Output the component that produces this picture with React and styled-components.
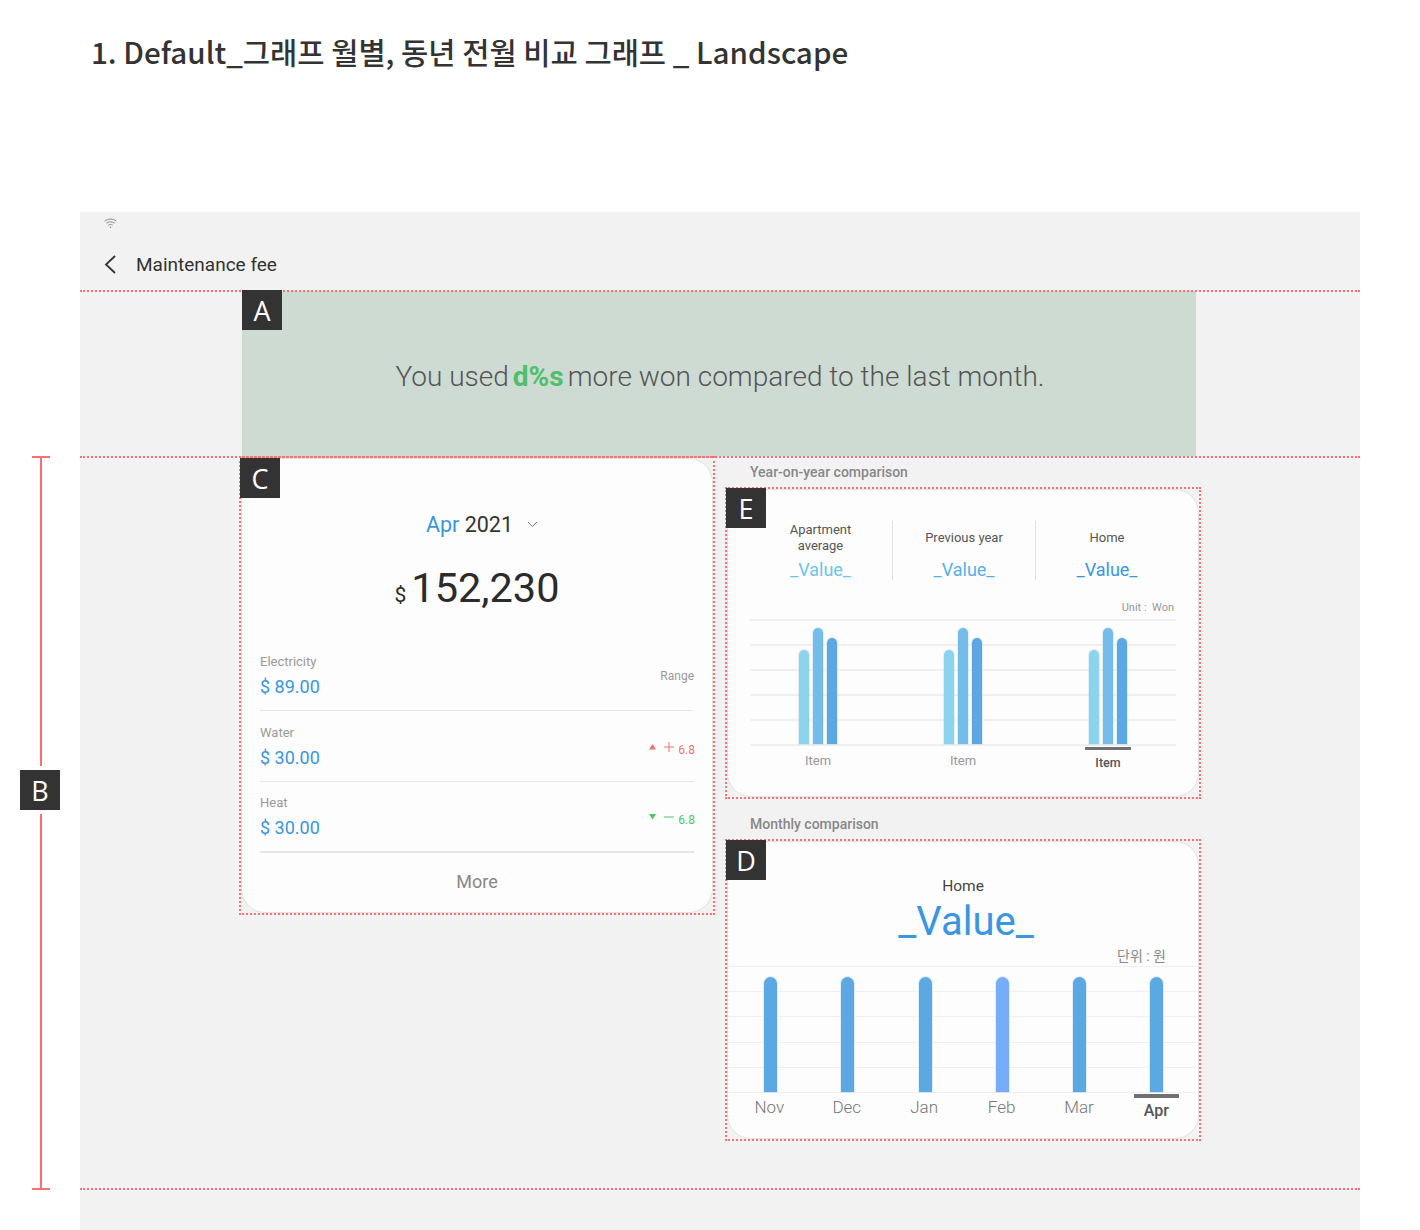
import styled, { createGlobalStyle } from "styled-components";

const GlobalStyle = createGlobalStyle`
    html, body {
        margin: 0;
        padding: 0;
        background: #ffffff;
    }
    * {
        box-sizing: border-box;
    }
`;

const yearItems = ["Item", "Item", "Item"];
const months = ["Nov", "Dec", "Jan", "Feb", "Mar", "Apr"];

const fees = [
    { label: "Electricity", value: "$ 89.00", range: true },
    { label: "Water", value: "$ 30.00", trend: "up" },
    { label: "Heat", value: "$ 30.00", trend: "down" },
];

const summary = [
    { label: <>Apartment<br />average</>, color: "#6cc3ec" },
    { label: "Previous year", color: "#56b0e8" },
    { label: "Home", color: "#3a96e0" },
];

export default function App() {
    return (
        <Page>
            <GlobalStyle />
            <Heading>1. Default_그래프 월별, 동년 전월 비교 그래프 _ Landscape</Heading>
            <Device>
                <StatusBar>
                    <WifiIcon />
                </StatusBar>
                <AppBar>
                    <BackIcon />
                    <AppTitle>Maintenance fee</AppTitle>
                </AppBar>
                <Banner>
                    <Badge $left={0} $top={-1}>A</Badge>
                    <BannerText>
                        <span>You used</span>
                        <strong>d%s</strong>
                        <span>more won compared to the last month.</span>
                    </BannerText>
                </Banner>
                <Content>
                    <FeeFrame>
                        <Badge $left={-1} $top={0}>C</Badge>
                        <FeeCard />
                    </FeeFrame>
                    <Side>
                        <SectionTitle>Year-on-year comparison</SectionTitle>
                        <Frame $height={312}>
                            <Badge $left={-1} $top={-1}>E</Badge>
                            <YearCard />
                        </Frame>
                        <SectionTitle $gap={9}>Monthly comparison</SectionTitle>
                        <Frame $height={302}>
                            <Badge $left={-1} $top={-1}>D</Badge>
                            <MonthCard />
                        </Frame>
                    </Side>
                </Content>
                <DottedLine $top={78} />
                <DottedLine $top={244} />
                <DottedLine $top={976} />
            </Device>
            <Ruler>
                <RulerBadge>B</RulerBadge>
            </Ruler>
        </Page>
    );
}

function FeeCard() {
    return (
        <Card>
            <DateRow>
                <DateText><span>Apr</span> 2021</DateText>
                <svg width="11" height="7" viewBox="0 0 11 7" fill="none">
                    <path d="M1 1l4.5 4.5L10 1" stroke="#777" strokeWidth="1" />
                </svg>
            </DateRow>
            <Amount><small>$</small>152,230</Amount>
            <FeeList>
                {fees.map((fee, index) => <FeeRow fee={fee} last={index === fees.length - 1} key={index} />)}
            </FeeList>
            <More>More</More>
        </Card>
    );
}

function FeeRow(props) {
    const { fee, last } = props;
    return (
        <Row $last={last}>
            <div>
                <RowLabel>{fee.label}</RowLabel>
                <RowValue>{fee.value}</RowValue>
            </div>
            {fee.range ? <RangeText>Range</RangeText> : <Trend trend={fee.trend} />}
        </Row>
    );
}

function Trend(props) {
    const up = props.trend === "up";
    return (
        <TrendBox $up={up}>
            <svg width="7" height="6" viewBox="0 0 7 6">
                <path d={up ? "M3.5 0L7 5.5H0z" : "M3.5 5.5L7 0H0z"} fill="currentColor" />
            </svg>
            <svg width="10" height="10" viewBox="0 0 10 10">
                <path d={up ? "M0 5h10M5 0v10" : "M0 5h10"} stroke="currentColor" strokeWidth="1" fill="none" />
            </svg>
            <TrendNumber>6.8</TrendNumber>
        </TrendBox>
    );
}

function YearCard() {
    return (
        <Card>
            <Summary>
                {summary.map((item, index) => (
                    <SummaryCol key={index} $first={index === 0}>
                        <SummaryLabel>{item.label}</SummaryLabel>
                        <SummaryValue $color={item.color}>_Value_</SummaryValue>
                    </SummaryCol>
                ))}
            </Summary>
            <UnitText>Unit :&nbsp; Won</UnitText>
            <YearChart>
                <GridLines>
                    {[0, 1, 2, 3, 4, 5].map(line => <GridLine key={line} />)}
                </GridLines>
                <YearBars>
                    {yearItems.map((item, index) => (
                        <YearGroup key={index}>
                            <Bar $width={10} $height={94} $color="#8cd3ee" />
                            <Bar $width={10} $height={116} $color="#74bce9" />
                            <Bar $width={10} $height={106} $color="#5ba8e3" />
                        </YearGroup>
                    ))}
                </YearBars>
            </YearChart>
            <YearLabels>
                {yearItems.map((item, index) => (
                    <YearLabel key={index} $active={index === 2}>{item}</YearLabel>
                ))}
            </YearLabels>
        </Card>
    );
}

function MonthCard() {
    return (
        <Card>
            <HomeLabel>Home</HomeLabel>
            <BigValue>_Value_</BigValue>
            <MonthUnit>단위 : 원</MonthUnit>
            <MonthChart>
                <GridLines>
                    {[0, 1, 2, 3, 4, 5].map(line => <GridLine key={line} $thin />)}
                </GridLines>
                <MonthBars>
                    {months.map(month => (
                        <Bar key={month} $width={13} $height={115} $color={month === "Feb" ? "#75adfb" : "#5ba8e3"} />
                    ))}
                </MonthBars>
            </MonthChart>
            <MonthLabels>
                {months.map(month => (
                    <MonthLabel key={month} $active={month === "Apr"}>{month}</MonthLabel>
                ))}
            </MonthLabels>
        </Card>
    );
}

function WifiIcon() {
    return (
        <svg width="13" height="11" viewBox="0 0 13 11" fill="none" stroke="#8a8a8a" strokeWidth="1">
            <path d="M.5 3.2C3.8.4 9.2.4 12.5 3.2" />
            <path d="M2.4 5.2C4.6 3.4 8.4 3.4 10.6 5.2" />
            <path d="M4.3 7.2C5.5 6.3 7.5 6.3 8.7 7.2" />
            <circle cx="6.5" cy="9.3" r=".8" fill="#8a8a8a" stroke="none" />
        </svg>
    );
}

function BackIcon() {
    return (
        <BackSvg width="12" height="19" viewBox="0 0 12 19" fill="none">
            <path d="M11 1L2 9.5L11 18" stroke="#333" strokeWidth="1.8" />
        </BackSvg>
    );
}

const Page = styled.div`
    position: relative;
    width: 1420px;
    height: 1230px;
    overflow: hidden;
    background: #ffffff;
    font-family: Roboto, "Noto Sans CJK KR", sans-serif;
`;

const Heading = styled.h1`
    height: 212px;
    margin: 0;
    padding: 31px 0 0 91px;
    font-family: "Noto Sans CJK KR", Roboto, sans-serif;
    font-size: 29.6px;
    font-weight: 500;
    line-height: 42px;
    color: #333333;
`;

const Device = styled.div`
    position: relative;
    width: 1280px;
    height: 1018px;
    margin-left: 80px;
    background: #f2f2f2;
`;

const StatusBar = styled.div`
    display: flex;
    align-items: flex-start;
    height: 24px;
    padding: 6px 0 0 24px;
`;

const AppBar = styled.div`
    display: flex;
    align-items: center;
    height: 55px;
    padding: 2px 0 0 24px;
`;

const BackSvg = styled.svg`
    margin-right: 20px;
`;

const AppTitle = styled.div`
    font-size: 19px;
    color: #333333;
`;

const Banner = styled.div`
    position: relative;
    display: flex;
    align-items: center;
    justify-content: center;
    width: 954px;
    height: 165px;
    margin-left: 162px;
    padding: 6px 0 0 2px;
    background: #cddbd3;
`;

const BannerText = styled.div`
    display: flex;
    column-gap: 4px;
    font-size: 28px;
    font-weight: 300;
    color: #555555;
    white-space: nowrap;

    strong {
        font-weight: 700;
        color: #4fbf6b;
    }
`;

const Badge = styled.div`
    position: absolute;
    left: ${props => props.$left}px;
    top: ${props => props.$top}px;
    z-index: 3;
    display: flex;
    align-items: center;
    justify-content: center;
    width: 40px;
    height: 40px;
    background: #333333;
    color: #ffffff;
    font-family: "Open Sans", sans-serif;
    font-size: 27px;
`;

const Content = styled.div`
    display: flex;
    align-items: flex-start;
    column-gap: 10px;
    padding-left: 159px;
`;

const Frame = styled.div`
    position: relative;
    width: 476px;
    height: ${props => props.$height}px;
    border: 2px dotted #ff6f6f;
`;

const FeeFrame = styled(Frame)`
    height: 459px;
`;

const Side = styled.div`
    display: flex;
    flex-direction: column;
`;

const SectionTitle = styled.div`
    height: 31px;
    margin-top: ${props => props.$gap || 0}px;
    padding: 8px 0 0 25px;
    font-size: 14px;
    font-weight: 500;
    line-height: 16px;
    color: #888888;
`;

const Card = styled.div`
    height: 100%;
    border: 1px solid #e2e2e2;
    border-radius: 24px;
    background: #fdfdfd;
`;

const DateRow = styled.div`
    display: flex;
    align-items: center;
    justify-content: center;
    column-gap: 14px;
    margin: 50px 0 0 10px;
    height: 30px;
`;

const DateText = styled.div`
    font-size: 21.5px;
    color: #333333;

    span {
        color: #3a96e0;
    }
`;

const Amount = styled.div`
    display: flex;
    align-items: baseline;
    justify-content: center;
    column-gap: 5px;
    height: 50px;
    margin-top: 24px;
    font-size: 41.5px;
    line-height: 50px;
    color: #2b2b2b;

    small {
        font-size: 21px;
    }
`;

const FeeList = styled.div`
    margin: 27px 18px 0 18px;
`;

const Row = styled.div`
    display: flex;
    align-items: center;
    justify-content: space-between;
    height: 71px;
    padding-top: 2px;
    border-bottom: ${props => props.$last ? "2px" : "1px"} solid #e6e6e6;
`;

const RowLabel = styled.div`
    font-size: 13px;
    line-height: 16px;
    color: #999999;
`;

const RowValue = styled.div`
    margin-top: 5px;
    font-size: 18px;
    line-height: 24px;
    color: #3a96e0;
`;

const RangeText = styled.div`
    font-size: 12px;
    color: #999999;
`;

const TrendBox = styled.div`
    display: flex;
    align-items: center;
    column-gap: 8px;
    margin: 0 -1px 1px 0;
    color: ${props => props.$up ? "#f47272" : "#4fc56b"};
`;

const TrendNumber = styled.span`
    margin: 6px 0 0 -4px;
    font-size: 12px;
    line-height: 14px;
`;

const More = styled.div`
    margin-top: 18px;
    font-size: 18px;
    line-height: 22px;
    text-align: center;
    color: #888888;
`;

const Summary = styled.div`
    display: flex;
    height: 59px;
    margin: 31px 0 0 21px;
`;

const SummaryCol = styled.div`
    display: flex;
    flex-direction: column;
    align-items: center;
    justify-content: space-between;
    width: 143px;
    border-left: ${props => props.$first ? "none" : "1px solid #e2e2e2"};
`;

const SummaryLabel = styled.div`
    display: flex;
    flex: 1;
    align-items: center;
    padding-bottom: 6px;
    font-size: 13px;
    line-height: 16px;
    text-align: center;
    color: #555555;
`;

const SummaryValue = styled.div`
    font-size: 18px;
    line-height: 20px;
    color: ${props => props.$color};
`;

const UnitText = styled.div`
    margin-top: 21px;
    padding-right: 24px;
    font-size: 11px;
    line-height: 14px;
    text-align: right;
    color: #999999;
`;

const YearChart = styled.div`
    position: relative;
    height: 127px;
    margin: 4px 22px 0 22px;
`;

const GridLines = styled.div`
    display: flex;
    flex-direction: column;
    justify-content: space-between;
    height: 100%;
`;

const GridLine = styled.div`
    height: ${props => props.$thin ? "1px" : "2px"};
    background: #efefef;
`;

const YearBars = styled.div`
    position: absolute;
    left: 49px;
    bottom: 2px;
    display: flex;
    align-items: flex-end;
    column-gap: 107px;
`;

const YearGroup = styled.div`
    display: flex;
    align-items: flex-end;
    column-gap: 4px;
    width: 38px;
`;

const Bar = styled.div`
    width: ${props => props.$width}px;
    height: ${props => props.$height}px;
    border-radius: ${props => props.$width / 2}px ${props => props.$width / 2}px 0 0;
    background: ${props => props.$color};
    box-shadow: 0 0 0 1px rgba(120, 180, 230, 0.2);
`;

const YearLabels = styled.div`
    display: flex;
    column-gap: 107px;
    padding-left: 71px;
`;

const YearLabel = styled.div`
    position: relative;
    width: 38px;
    padding-top: ${props => props.$active ? "9px" : "7px"};
    font-size: ${props => props.$active ? "12.5px" : "13px"};
    font-weight: ${props => props.$active ? 500 : 400};
    line-height: 16px;
    text-align: center;
    color: ${props => props.$active ? "#555555" : "#999999"};

    &::before {
        content: "";
        display: ${props => props.$active ? "block" : "none"};
        position: absolute;
        left: -4px;
        top: 1px;
        width: 46px;
        height: 3px;
        background: #707070;
    }
`;

const HomeLabel = styled.div`
    margin-top: 35px;
    font-size: 15.5px;
    line-height: 18px;
    text-align: center;
    color: #444444;
`;

const BigValue = styled.div`
    margin-top: 4px;
    padding-left: 6px;
    font-size: 40px;
    line-height: 46px;
    text-align: center;
    color: #3a96e0;
`;

const MonthUnit = styled.div`
    margin-top: 2px;
    padding-right: 32px;
    font-size: 14px;
    line-height: 18px;
    text-align: right;
    color: #888888;
`;

const MonthChart = styled.div`
    position: relative;
    height: 127px;
    margin-top: 1px;
`;

const MonthBars = styled.div`
    position: absolute;
    left: 36px;
    bottom: 1px;
    display: flex;
    align-items: flex-end;
    column-gap: 64.3px;
`;

const MonthLabels = styled.div`
    display: flex;
    column-gap: 27.4px;
    padding-left: 16.4px;
`;

const MonthLabel = styled.div`
    position: relative;
    width: 50px;
    padding-top: ${props => props.$active ? "8px" : "4px"};
    font-size: ${props => props.$active ? "16px" : "17px"};
    font-weight: ${props => props.$active ? 500 : 300};
    line-height: 20px;
    text-align: center;
    color: ${props => props.$active ? "#555555" : "#777777"};

    &::before {
        content: "";
        display: ${props => props.$active ? "block" : "none"};
        position: absolute;
        left: 3px;
        top: 1px;
        width: 45px;
        height: 4px;
        background: #707070;
    }
`;

const DottedLine = styled.div`
    position: absolute;
    left: 0;
    right: 0;
    top: ${props => props.$top}px;
    z-index: 2;
    border-top: 2px dotted #ff6f6f;
`;

const Ruler = styled.div`
    position: absolute;
    left: 32px;
    top: 456px;
    display: flex;
    align-items: flex-start;
    justify-content: center;
    width: 18px;
    height: 734px;
    border-top: 2px solid #ff6f6f;
    border-bottom: 2px solid #ff6f6f;

    &::before {
        content: "";
        position: absolute;
        left: 8px;
        top: 0;
        bottom: 0;
        width: 2px;
        background: #ff6f6f;
    }
`;

const RulerBadge = styled.div`
    position: relative;
    display: flex;
    align-items: center;
    justify-content: center;
    flex: none;
    width: 40px;
    height: 40px;
    margin: 312px 0 0 -2px;
    background: #333333;
    color: #ffffff;
    font-family: "Open Sans", sans-serif;
    font-size: 27px;
    box-shadow: 0 0 0 4px #ffffff;
`;
